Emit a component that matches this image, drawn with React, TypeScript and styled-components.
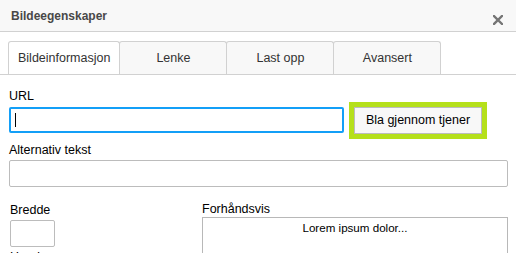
import styled, { createGlobalStyle } from 'styled-components'

const GlobalStyle = createGlobalStyle`
  html, body {
    margin: 0;
    padding: 0;
    background: #fff;
  }
  body {
    font-family: 'Liberation Sans', Arial, sans-serif;
    overflow: hidden;
  }
`

const tabs = ['Bildeinformasjon', 'Lenke', 'Last opp', 'Avansert']

const CloseIcon = () => (
  <svg width='10' height='10' viewBox='0 0 10 10'>
    <path d='M1 1 L9 9 M9 1 L1 9' stroke='#757575' strokeWidth='2.4' strokeLinecap='square' />
  </svg>
)

const App = () => {
  return (
    <Dialog>
      <GlobalStyle />
      <Header>
        <Title>Bildeegenskaper</Title>
        <CloseButton>
          <CloseIcon />
        </CloseButton>
      </Header>
      <TabBar>
        {tabs.map((tab, i) => (
          <Tab key={tab} $active={i === 0}>
            {tab}
          </Tab>
        ))}
      </TabBar>
      <Content>
        <Label>URL</Label>
        <UrlRow>
          <UrlInput $focused>
            <Caret />
          </UrlInput>
          <BrowseButton>Bla gjennom tjener</BrowseButton>
        </UrlRow>
        <Label $top={6}>Alternativ tekst</Label>
        <WideInput />
        <Columns>
          <SizeColumn>
            <Label>Bredde</Label>
            <SmallInput />
            <Label $top={2}>Høyde</Label>
          </SizeColumn>
          <PreviewColumn>
            <PreviewLabel>Forhåndsvis</PreviewLabel>
            <PreviewBox>Lorem ipsum dolor...</PreviewBox>
          </PreviewColumn>
        </Columns>
      </Content>
    </Dialog>
  )
}
export default App

const Dialog = styled.div`
  width: 516px;
  height: 253px;
  overflow: hidden;
  background: #fff;
`
const Header = styled.div`
  height: 31px;
  background: #f8f8f8;
  border-bottom: 1px solid #d1d1d1;
  display: flex;
  justify-content: space-between;
  align-items: flex-start;
`
const Title = styled.div`
  padding: 9px 0 0 11px;
  font-size: 12px;
  line-height: 15px;
  font-weight: bold;
  color: #484848;
`
const CloseButton = styled.div`
  margin: 15px 13px 0 0;
  width: 10px;
  height: 10px;
  display: flex;
`
const TabBar = styled.div`
  display: flex;
  padding: 9px 0 0 8px;
  border-bottom: 1px solid #d1d1d1;
`
const Tab = styled.div<{ $active?: boolean }>`
  box-sizing: border-box;
  min-width: 108px;
  height: 33px;
  padding: 0 9px;
  margin-right: -1px;
  display: flex;
  align-items: center;
  justify-content: center;
  font-size: 12.5px;
  color: #333;
  background: ${(p) => (p.$active ? '#fff' : '#f8f8f8')};
  border: 1px solid #d1d1d1;
  border-bottom: none;
  border-radius: 3px 3px 0 0;
`
const Content = styled.div`
  padding: 13px 8px 0 9px;
`
const Label = styled.div<{ $top?: number }>`
  margin-top: ${(p) => p.$top || 0}px;
  font-size: 12.5px;
  line-height: 16px;
  color: #000;
`
const UrlRow = styled.div`
  display: flex;
  align-items: center;
  gap: 10px;
  height: 32px;
`
const UrlInput = styled.div<{ $focused?: boolean }>`
  box-sizing: border-box;
  width: 335px;
  height: 26px;
  border: ${(p) => (p.$focused ? '2px solid #139ff7' : '1px solid #bcbcbc')};
  border-radius: 2px;
  display: flex;
  align-items: center;
  padding-left: 4px;
`
const Caret = styled.div`
  width: 1px;
  height: 14px;
  background: #000;
`
const BrowseButton = styled.div`
  box-sizing: border-box;
  width: 128px;
  height: 27px;
  display: flex;
  align-items: center;
  justify-content: center;
  background: #f8f8f8;
  border: 1px solid #bcbcbc;
  outline: 5px solid #b5e01b;
  font-size: 12.5px;
  color: #000;
`
const WideInput = styled.div`
  box-sizing: border-box;
  margin-top: 2px;
  width: 499px;
  height: 27px;
  border: 1px solid #bcbcbc;
  border-radius: 2px;
`
const Columns = styled.div`
  display: flex;
  margin-top: 15px;
`
const SizeColumn = styled.div`
  width: 192px;
  padding-left: 1px;
`
const SmallInput = styled.div`
  box-sizing: border-box;
  margin-top: 2px;
  width: 45px;
  height: 27px;
  border: 1px solid #bcbcbc;
  border-radius: 2px;
`
const PreviewColumn = styled.div`
  flex: 1;
`
const PreviewLabel = styled.div`
  font-size: 12.5px;
  line-height: 15px;
  color: #000;
`
const PreviewBox = styled.div`
  box-sizing: border-box;
  height: 100px;
  border: 1px solid #b8b8b8;
  border-bottom: none;
  padding-top: 3px;
  text-align: center;
  font-size: 11.6px;
  line-height: 13px;
  color: #000;
`
